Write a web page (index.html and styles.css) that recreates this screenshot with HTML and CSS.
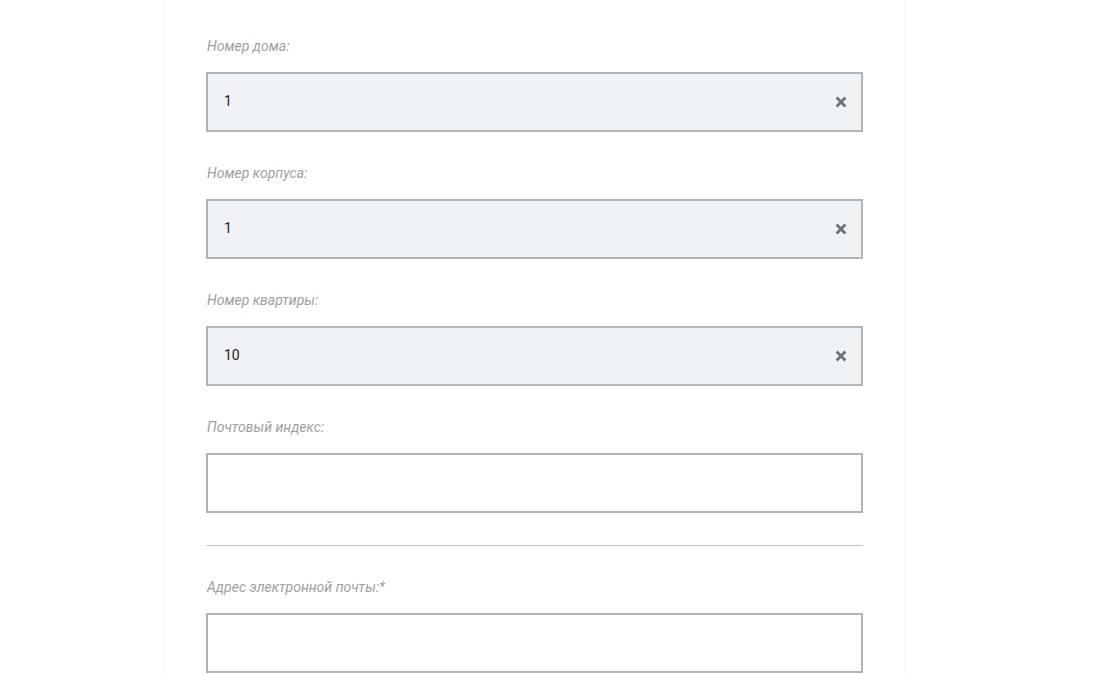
FILE: index.html
```html
<!DOCTYPE html>
<html lang="ru">
<head>
<meta charset="utf-8">
<title>Форма</title>
<link rel="stylesheet" href="styles.css">
</head>
<body>
<div class="page">
  <form class="card">
    <div class="field">
      <label class="label">Номер дома:</label>
      <div class="input filled"><span class="value">1</span><span class="clear"><svg width="12" height="12" viewBox="0 0 12 12"><path d="M1.6 1.6 L10.4 10.4 M10.4 1.6 L1.6 10.4" stroke="#6f7378" stroke-width="2.8" stroke-linecap="butt"/></svg></span></div>
    </div>
    <div class="field">
      <label class="label">Номер корпуса:</label>
      <div class="input filled"><span class="value">1</span><span class="clear"><svg width="12" height="12" viewBox="0 0 12 12"><path d="M1.6 1.6 L10.4 10.4 M10.4 1.6 L1.6 10.4" stroke="#6f7378" stroke-width="2.8" stroke-linecap="butt"/></svg></span></div>
    </div>
    <div class="field">
      <label class="label">Номер квартиры:</label>
      <div class="input filled"><span class="value">10</span><span class="clear"><svg width="12" height="12" viewBox="0 0 12 12"><path d="M1.6 1.6 L10.4 10.4 M10.4 1.6 L1.6 10.4" stroke="#6f7378" stroke-width="2.8" stroke-linecap="butt"/></svg></span></div>
    </div>
    <div class="field">
      <label class="label">Почтовый индекс:</label>
      <div class="input"></div>
    </div>
    <hr class="divider">
    <div class="field">
      <label class="label">Адрес электронной почты:*</label>
      <div class="input"></div>
    </div>
  </form>
</div>
</body>
</html>
```
FILE: styles.css
```css
html, body {
  margin: 0;
  padding: 0;
  background: #ffffff;
}
body {
  font-family: Roboto, "Liberation Sans", sans-serif;
}
.page {
  display: flex;
  padding-left: 165px;
}
.card {
  width: 657px;
  padding: 37px 41px 24px 41px;
  background: #fff;
  box-shadow: 0 0 3px rgba(0, 0, 0, 0.07);
  display: flex;
  flex-direction: column;
  gap: 32px;
}
.field {
  display: flex;
  flex-direction: column;
}
.label {
  font-size: 14px;
  line-height: 18px;
  font-style: italic;
  color: #a0a0a0;
  margin-bottom: 17px;
  padding-left: 1px;
}
.input {
  box-sizing: border-box;
  height: 60px;
  border: 2px solid #b4b4b4;
  background: #fff;
  display: flex;
  align-items: center;
  justify-content: space-between;
  padding: 0 14px 0 16px;
}
.input.filled {
  background: #eff3f6;
}
.value {
  font-size: 14px;
  color: #222;
  margin-top: -2px;
}
.clear {
  display: flex;
  align-items: center;
}
.divider {
  margin: 0;
  border: 0;
  height: 1px;
  background: #c4c4c4;
}
```
